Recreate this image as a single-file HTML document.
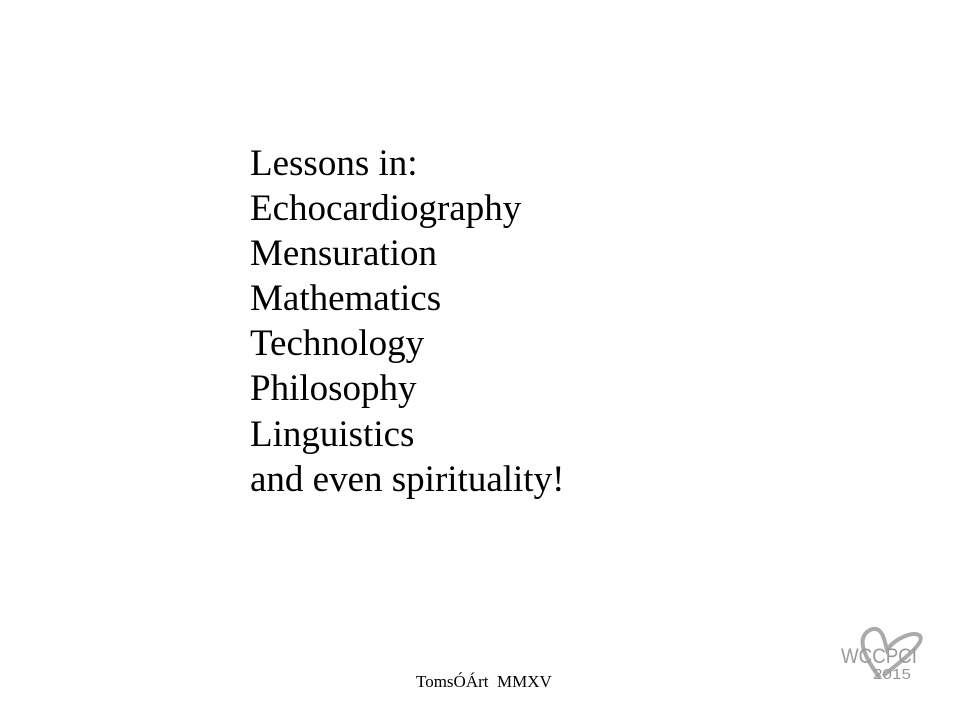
<!DOCTYPE html>
<html><head><style>
body{margin:0;width:960px;height:720px;background:#fff;position:relative;overflow:hidden;font-family:"Liberation Serif",serif;color:#000}
.t{position:absolute;left:250px;top:141px;font-size:37px;line-height:45.1px;white-space:nowrap}
.f{position:absolute;left:416px;top:672px;font-size:17px;white-space:nowrap}
.logo{position:absolute;left:835px;top:618px}
</style></head><body>
<div class="t">Lessons in:<br>Echocardiography<br>Mensuration<br>Mathematics<br>Technology<br>Philosophy<br>Linguistics<br>and even spirituality!</div>
<div class="f">TomsÓÁrt&nbsp; MMXV</div>
<svg class="logo" width="95" height="70" viewBox="0 0 95 70">
<path d="M45 60 C30 40 20 20 35 12 C48 6 50 25 52 32 C60 20 80 12 85 18 C90 25 70 40 48 58" fill="none" stroke="#aaa" stroke-width="4"/>
<text x="6" y="45" font-family="Liberation Sans,sans-serif" font-size="21" fill="#999" textLength="76" lengthAdjust="spacingAndGlyphs">WCCPCI</text>
<text x="38" y="61" font-family="Liberation Sans,sans-serif" font-size="15" fill="#999" textLength="38" lengthAdjust="spacingAndGlyphs">2015</text>
</svg>
</body></html>
